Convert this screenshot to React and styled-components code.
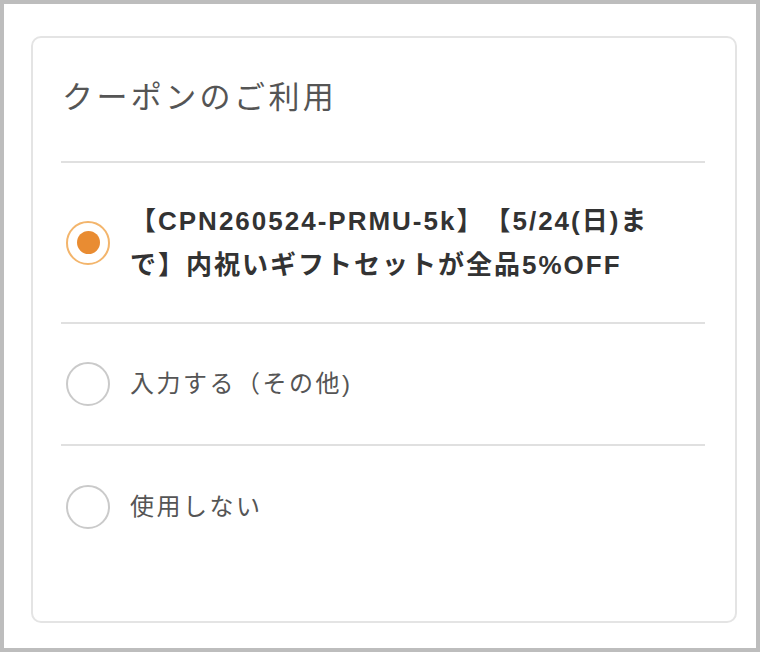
import React, { useState } from "react";
import styled, { createGlobalStyle } from "styled-components";

const Global = createGlobalStyle`
  html, body { margin: 0; padding: 0; background: #fff; }
  * { box-sizing: border-box; }
  body {
    font-family: "Liberation Sans", "Noto Sans CJK JP", sans-serif;
    text-spacing-trim: space-all;
  }
`;

const Frame = styled.div`
  width: 760px;
  height: 652px;
  border: 4px solid #bdbdbd;
  background: #fff;
  padding: 32px 19px 25px 27px;
`;

const Card = styled.section`
  height: 100%;
  border: 2px solid #e4e4e4;
  border-radius: 10px;
  padding: 0 30px 0 28px;
  display: flex;
  flex-direction: column;
`;

const Title = styled.h2`
  margin: 0;
  height: 125px;
  display: flex;
  align-items: center;
  padding-left: 1px;
  padding-bottom: 10px;
  font-family: "Noto Sans CJK JP", sans-serif;
  font-size: 31px;
  font-weight: 400;
  letter-spacing: 3.4px;
  color: #555;
  border-bottom: 2px solid #e0e0e0;
`;

const Option = styled.label`
  display: flex;
  align-items: center;
  gap: 20px;
  padding-left: 5px;
  height: ${(p) => p.$h}px;
  border-bottom: ${(p) => (p.$last ? "none" : "2px solid #e0e0e0")};
  cursor: pointer;
`;

const Radio = styled.span`
  flex: 0 0 44px;
  width: 44px;
  height: 44px;
  border-radius: 50%;
  border: 2px solid ${(p) => (p.$on ? "#f3b56c" : "#cacaca")};
  display: flex;
  align-items: center;
  justify-content: center;
  &::after {
    content: "";
    width: 23px;
    height: 23px;
    border-radius: 50%;
    background: #e98c32;
    display: ${(p) => (p.$on ? "block" : "none")};
  }
`;

const Text = styled.span`
  max-width: 540px;
  font-size: ${(p) => (p.$bold ? 26 : 24)}px;
  font-weight: ${(p) => (p.$bold ? 700 : 400)};
  letter-spacing: ${(p) => (p.$bold ? 2 : 2.5)}px;
  line-height: 44px;
  color: ${(p) => (p.$bold ? "#333" : "#555")};
`;

const options = [
  { id: "c1", label: "【CPN260524-PRMU-5k】【5/24(日)まで】内祝いギフトセットが全品5%OFF", bold: true, h: 161 },
  { id: "c2", label: "入力する（その他)", h: 122 },
  { id: "c3", label: "使用しない", h: 122, last: true },
];

export default function App() {
  const [sel, setSel] = useState("c1");
  return (
    <>
      <Global />
      <Frame>
        <Card>
          <Title>クーポンのご利用</Title>
          {options.map((o) => (
            <Option key={o.id} $h={o.h} $last={o.last} onClick={() => setSel(o.id)}>
              <Radio $on={sel === o.id} />
              <Text $bold={o.bold}>{o.label}</Text>
            </Option>
          ))}
        </Card>
      </Frame>
    </>
  );
}
